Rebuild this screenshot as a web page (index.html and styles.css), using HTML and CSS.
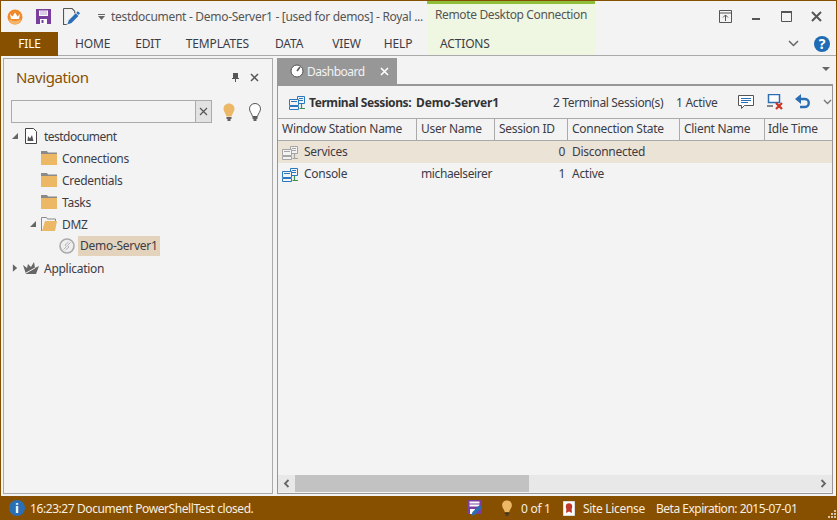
FILE: index.html
```html
<!DOCTYPE html>
<html lang="en">
<head>
<meta charset="utf-8">
<title>Royal TS</title>
<link rel="stylesheet" href="styles.css">
</head>
<body>
<svg class="defs" width="0" height="0" aria-hidden="true">
  <defs>
    <symbol id="folder" viewBox="0 0 16 16">
      <path d="M0 1h6l1 1.500h9V4H0z" fill="#8a8a8a"/>
      <path d="M0 4h16v11H0z" fill="#ecb866"/>
    </symbol>
    <symbol id="net" viewBox="0 0 16 16">
      <path d="M8.500 2.500h7v7h-7z" fill="#f3f3f3" stroke="currentColor"/>
      <path d="M10 4.500h4M10 6.500h4" stroke="currentColor"/>
      <path d="M.5 5.500h9v6h-9z" fill="#f3f3f3" stroke="currentColor"/>
      <path d="M2 7.500h6" stroke="currentColor"/>
      <path d="M.5 12.500h9v3h-9z" fill="#f3f3f3" stroke="currentColor"/>
      <path d="M12.500 10v4M10.500 14.500h5.500" stroke="var(--net2)" stroke-width="1.200"/>
    </symbol>
  </defs>
</svg>
<div class="app">
  <header class="head">
    <div class="head-main">
      <div class="titlebar">
        <svg class="ic-logo" viewBox="0 0 16 16"><circle cx="8" cy="8" r="7.500" fill="#ee8a2a"/><path d="M3 5l2.500 2.500L8 3.500l2.500 4L13 5l-1 5H4z" fill="#fff"/><path d="M1.500 10q6.500 4 13 0-1.500 5-6.500 5.500-5-.5-6.500-5.500z" fill="#f7b468"/></svg>
        <svg class="ic-save" viewBox="0 0 15 15"><path d="M0 0h15v15H0z" fill="#7a3f9d"/><path d="M3 1.500h9v5.500H3z" fill="#fff"/><path d="M4 3h7M4 5h7" stroke="#b79ccb"/><path d="M4 10h7v5H4z" fill="#fff"/><path d="M5.500 11h2v3h-2z" fill="#7a3f9d"/></svg>
        <svg class="ic-edit" viewBox="0 0 16 16"><path d="M.5.500h8l2.500 2.500v2M.5.500v15h3" fill="none" stroke="#555"/><path d="M4 15.500l1.500-4 6.500-6.500 2.500 2.500L8 14z" fill="#2a6fb5"/><path d="M12.500 4.500l1.500-1.500 2 2-1.500 1.500z" fill="#2a6fb5"/></svg>
        <svg class="ic-qat" viewBox="0 0 7 6"><path d="M0 0h7v1H0zM0 2h7L3.500 6z" fill="#666"/></svg>
        <span class="doc-title">testdocument - Demo-Server1 - [used for demos] - Royal ...</span>
      </div>
      <nav class="tabs">
        <span class="file-tab">FILE</span>
        <span class="tab tab-home">HOME</span>
        <span class="tab tab-edit">EDIT</span>
        <span class="tab tab-tpl">TEMPLATES</span>
        <span class="tab tab-data">DATA</span>
        <span class="tab tab-view">VIEW</span>
        <span class="tab">HELP</span>
      </nav>
    </div>
    <div class="context">
      <div class="context-title">Remote Desktop Connection</div>
      <div class="context-tab">ACTIONS</div>
    </div>
    <div class="head-right">
      <div class="win-btns">
        <svg class="win win-pin" viewBox="0 0 13 13"><path d="M.5.500h12v12H.5zM.5 3h12" fill="none" stroke="#555"/><path d="M6.500 11V5M4 7.500l2.500-2.500L9 7.500" fill="none" stroke="#555"/></svg>
        <svg class="win win-min" viewBox="0 0 13 13"><path d="M2 8h8v2H2z" fill="#555"/></svg>
        <svg class="win win-max" viewBox="0 0 13 13"><path d="M1.500 1.500h10v10h-10z" fill="none" stroke="#555"/><path d="M1 1h11v2H1z" fill="#555"/></svg>
        <svg class="win win-close" viewBox="0 0 13 13"><path d="M2 2l9 9M11 2l-9 9" stroke="#555" stroke-width="2"/></svg>
      </div>
      <div class="head-tools">
        <svg class="chev" viewBox="0 0 11 7"><path d="M1 1l4.500 4.500L10 1" fill="none" stroke="#666" stroke-width="1.500"/></svg>
        <span class="help">?</span>
      </div>
    </div>
  </header>

  <main class="work">
    <section class="nav">
      <div class="nav-head">
        <span class="nav-title">Navigation</span>
        <svg class="pin" viewBox="0 0 9 9"><path d="M2 0h5v5h1v1H5v3H4V6H1V5h1z" fill="#555"/></svg>
        <svg class="x" viewBox="0 0 9 9"><path d="M1 1l7 7M8 1L1 8" stroke="#555" stroke-width="1.500"/></svg>
      </div>
      <div class="search">
        <div class="search-box"><span class="search-input"></span><span class="search-clear"><svg viewBox="0 0 9 9"><path d="M1 1l7 7M8 1L1 8" stroke="#555" stroke-width="1.200"/></svg></span></div>
        <svg class="bulb bulb-on" viewBox="0 0 12 18"><path d="M6 .5C2.800.5.500 2.800.5 5.800c0 3 2.200 4.200 3 7.700h5c.8-3.500 3-4.700 3-7.700C11.500 2.800 9.200.5 6 .5z" fill="#ecb866"/><path d="M3.500 15h5M4.500 17h3" stroke="#333" stroke-width="1.300"/></svg>
        <svg class="bulb bulb-off" viewBox="0 0 12 18"><path d="M6 .5C2.800.5.500 2.800.5 5.800c0 3 2.200 4.200 3 7.700h5c.8-3.500 3-4.700 3-7.700C11.500 2.800 9.200.5 6 .5z" fill="#fff" stroke="#555"/><path d="M3.500 15h5M4.500 17h3" stroke="#333" stroke-width="1.300"/></svg>
      </div>
      <ul class="tree">
        <li class="node l0"><svg class="arrow" viewBox="0 0 7 7"><path d="M7 0v7H0z" fill="#666"/></svg>
          <svg class="ic16 doc" viewBox="0 0 16 16"><path d="M1.500 .5h8l3 3v12h-11z" fill="#fff" stroke="#444"/><path d="M3.500 13l.5-5 2 2.500L8 7l1.500 6z" fill="#555"/></svg>
          <span class="root-label">testdocument</span></li>
        <li class="node l1"><svg class="ic16"><use href="#folder"/></svg><span>Connections</span></li>
        <li class="node l1"><svg class="ic16"><use href="#folder"/></svg><span>Credentials</span></li>
        <li class="node l1"><svg class="ic16"><use href="#folder"/></svg><span>Tasks</span></li>
        <li class="node l1b"><svg class="arrow" viewBox="0 0 7 7"><path d="M7 0v7H0z" fill="#666"/></svg>
          <svg class="ic16" viewBox="0 0 16 16"><path d="M.5 15V1.500h5l1 1.500h8v2" fill="none" stroke="#8a8a8a"/><path d="M4 5h12l-2 10H1z" fill="#ecb866"/></svg>
          <span>DMZ</span></li>
        <li class="node l2"><svg class="ic16 srv" viewBox="0 0 16 16"><circle cx="8" cy="8" r="7" fill="#eee" stroke="#aaa" stroke-width="1.600"/><path d="M4.500 11.500l3-3-1.500-1.500 3.500-3M11.500 4.500l-3 3 1.500 1.500-3.500 3" fill="none" stroke="#b5b5b5"/></svg><span class="sel">Demo-Server1</span></li>
        <li class="node l0"><svg class="arrow arrow-r" viewBox="0 0 7 9"><path d="M1 0l5 4.500L1 9z" fill="#666"/></svg>
          <svg class="ic16 crown" viewBox="0 0 16 12"><path d="M0 3l4 3 1-4 3 3 3-5 1 6 4-2-3 8H3z" fill="#666"/><path d="M3 11l9-5" stroke="#f3f3f3"/></svg>
          <span>Application</span></li>
      </ul>
    </section>

    <section class="doc-area">
      <div class="doc-tabs">
        <div class="doc-tab">
          <svg class="gauge" viewBox="0 0 14 14"><circle cx="7" cy="7" r="6" fill="#fff" stroke="#555"/><path d="M7 7l3-4" stroke="#555" stroke-width="1.500"/></svg>
          <span class="doc-tab-label">Dashboard</span>
          <svg class="doc-tab-x" viewBox="0 0 9 9"><path d="M1 1l7 7M8 1L1 8" stroke="#fff" stroke-width="1.600"/></svg>
        </div>
        <svg class="doc-menu" viewBox="0 0 8 4"><path d="M0 0h8L4 4z" fill="#666"/></svg>
      </div>
      <div class="panel">
        <div class="panel-head">
          <svg class="ic16 net net-blue"><use href="#net"/></svg>
          <span class="panel-title">Terminal Sessions:</span>
          <span class="panel-title panel-server">Demo-Server1</span>
          <span class="count">2 Terminal Session(s)</span>
          <span class="active">1 Active</span>
          <svg class="tool tool-msg" viewBox="0 0 16 16"><path d="M.5 1.500h15v10h-9l-3 3v-3h-3z" fill="#fff" stroke="#555"/><path d="M3 4.500h10M3 6.500h10M3 8.500h7" stroke="#2a6fb5"/></svg>
          <svg class="tool tool-off" viewBox="0 0 16 16"><path d="M1.500 .5h11v8h-11z" fill="#fff" stroke="#2a6fb5" stroke-width="1.500"/><path d="M0 12h6" stroke="#888" stroke-width="2"/><path d="M9 9l6 6M15 9l-6 6" stroke="#cc3322" stroke-width="2.200"/></svg>
          <svg class="tool tool-undo" viewBox="0 0 16 16"><path d="M4 5h6c5 0 5 8 0 8H5" fill="none" stroke="#2a6fb5" stroke-width="2.400"/><path d="M6 0v10L0 5z" fill="#2a6fb5"/></svg>
          <svg class="panel-chev" viewBox="0 0 9 6"><path d="M1 1l3.500 3.500L8 1" fill="none" stroke="#777" stroke-width="1.400"/></svg>
        </div>
        <div class="grid">
          <div class="row row-head">
            <span class="c c1">Window Station Name</span>
            <span class="c c2">User Name</span>
            <span class="c c3">Session ID</span>
            <span class="c c4">Connection State</span>
            <span class="c c5">Client Name</span>
            <span class="c c6">Idle Time</span>
          </div>
          <div class="row row-sel">
            <span class="c c1"><svg class="ic16 net net-grey"><use href="#net"/></svg>Services</span>
            <span class="c c2"></span>
            <span class="c c3 num">0</span>
            <span class="c c4">Disconnected</span>
          </div>
          <div class="row">
            <span class="c c1"><svg class="ic16 net net-blue"><use href="#net"/></svg>Console</span>
            <span class="c c2">michaelseirer</span>
            <span class="c c3 num">1</span>
            <span class="c c4">Active</span>
          </div>
        </div>
        <div class="hscroll">
          <span class="sb-btn"><svg viewBox="0 0 7 9"><path d="M5.500 1L2 4.500 5.500 8" fill="none" stroke="#666" stroke-width="1.800"/></svg></span>
          <span class="sb-thumb"></span>
          <span class="sb-track"></span>
          <span class="sb-btn"><svg viewBox="0 0 7 9"><path d="M1.500 1L5 4.500 1.500 8" fill="none" stroke="#666" stroke-width="1.800"/></svg></span>
        </div>
      </div>
    </section>
  </main>

  <footer class="status">
    <span class="info">i</span>
    <span class="status-msg">16:23:27 Document PowerShellTest closed.</span>
    <svg class="st-save" viewBox="0 0 16 16"><path d="M0 0h15v14H0z" fill="#7a3f9d"/><path d="M2.500 1.500h10v2h-10zM2.500 4.500h10v2h-10z" fill="#fff"/><path d="M3 9h5v5H3z" fill="#fff"/><path d="M4 16l1.500-4 7-7 2.500 2.500-7 7z" fill="#2a6fb5"/></svg>
    <svg class="st-bulb" viewBox="0 0 12 18"><path d="M6 .5C2.800.5.500 2.800.5 5.800c0 3 2.200 4.200 3 7.700h5c.8-3.500 3-4.700 3-7.700C11.500 2.800 9.200.5 6 .5z" fill="#ecb866"/><path d="M3.500 15h5M4.500 17h3" stroke="#333" stroke-width="1.300"/></svg>
    <span class="st-count">0 of 1</span>
    <svg class="st-lic" viewBox="0 0 12 15"><path d="M.5.500h11v14H.5z" fill="#fff" stroke="#ddd"/><circle cx="6" cy="5.500" r="3.200" fill="#c0392b"/><path d="M3.500 7l-.5 5 3-1.500L9 12l-.5-5z" fill="#c0392b"/></svg>
    <span class="st-site">Site License</span>
    <span class="st-beta">Beta Expiration: 2015-07-01</span>
    <svg class="grip" viewBox="0 0 9 9"><path d="M7 0h2v2H7zM4 3h2v2H4zM7 3h2v2H7zM1 6h2v2H1zM4 6h2v2H4zM7 6h2v2H7z" fill="#d8c4a6"/></svg>
  </footer>
</div>
</body>
</html>
```

FILE: styles.css
```css
* { box-sizing: border-box; }
html, body { margin: 0; padding: 0; }
body { width: 837px; height: 520px; overflow: hidden; background: #f3f3f3; }
.defs { position: absolute; }
svg { display: block; flex: none; }

.app {
  width: 837px;
  height: 520px;
  display: flex;
  flex-direction: column;
  background: #f3f3f3;
  border: 1px solid #875000;
  border-bottom: 0;
  font-family: "Noto Sans", sans-serif;
  font-size: 12px;
  letter-spacing: -0.28px;
  color: #3c3c46;
}

/* header */
.head { display: flex; height: 55px; flex: none; }
.head-main { width: 426px; display: flex; flex-direction: column; }
.titlebar { height: 31px; display: flex; align-items: center; }
.ic-logo { width: 16px; height: 16px; margin-left: 6px; }
.ic-save { width: 15px; height: 15px; margin-left: 13px; }
.ic-edit { width: 17px; height: 17px; margin-left: 12px; }
.ic-qat { width: 7px; height: 6px; margin-left: 18px; }
.doc-title { margin-left: 6px; margin-top: -1px; color: #555; white-space: nowrap; letter-spacing: -0.3px; }
.tabs { height: 24px; display: flex; align-items: center; border-bottom: 1px solid #aaa; letter-spacing: -0.15px; }
.file-tab {
  width: 57px; height: 24px; margin-bottom: -1px;
  background: #875000; color: #fff; text-align: center; line-height: 23px;
}
.tab { color: #3c3c46; line-height: 26px; }
.tab-home { margin-left: 17px; margin-right: 25px; }
.tab-edit { margin-right: 25px; }
.tab-tpl { margin-right: 26px; }
.tab-data { margin-right: 29px; }
.tab-view { margin-right: 23px; }

.context { width: 168px; height: 55px; display: flex; flex-direction: column; background: #eff7e2; border-top: 3px solid #8fbf3a; border-bottom: 1px solid #aaa; }
.context-title { height: 25px; line-height: 21px; padding-left: 8px; color: #555; letter-spacing: -0.36px; }
.context-tab { height: 26px; padding-left: 13px; line-height: 30px; letter-spacing: -0.15px; }

.head-right { flex: 1; display: flex; flex-direction: column; }
.win-btns { height: 31px; display: flex; align-items: center; }
.win { width: 13px; height: 13px; }
.win-pin { margin-left: 124px; }
.win-min { margin-left: 18px; }
.win-max { margin-left: 17px; }
.win-close { margin-left: 17px; }
.head-tools { height: 24px; display: flex; align-items: center; border-bottom: 1px solid #aaa; }
.chev { width: 11px; height: 7px; margin-left: 193px; }
.help {
  width: 16px; height: 16px; margin-left: 15px; border-radius: 50%;
  background: #1f6cb4; color: #fff; text-align: center;
  font-weight: 700; font-size: 14px; line-height: 16px; letter-spacing: 0;
}

/* work */
.work { flex: 1; min-height: 0; display: flex; padding: 2px 3px 2px 2px; gap: 4px; }

.nav { width: 270px; border: 1px solid #aaa; background: #f3f3f3; display: flex; flex-direction: column; }
.nav-head { height: 41px; display: flex; align-items: center; padding-left: 12px; flex: none; }
.nav-title { font-size: 15px; color: #875000; flex: 1; letter-spacing: -0.4px; margin-top: -6px; }
.pin { width: 9px; height: 9px; margin-right: 10px; margin-top: -4px; }
.x { width: 9px; height: 9px; margin-right: 13px; margin-top: -4px; }
.search { display: flex; align-items: center; padding-left: 7px; height: 23px; flex: none; }
.search-box { width: 201px; height: 23px; display: flex; border: 1px solid #aaa; background: #f3f3f3; }
.search-input { flex: 1; }
.search-clear { width: 16px; background: #e2e2e2; border-left: 1px solid #aaa; display: flex; align-items: center; justify-content: center; }
.search-clear svg { width: 9px; height: 9px; }
.bulb { width: 12px; height: 18px; }
.bulb-on { margin-left: 11px; }
.bulb-off { margin-left: 14px; }

.tree { list-style: none; margin: 2px 0 0; padding: 0; }
.node { height: 22px; display: flex; align-items: center; }
.l0 { padding-left: 8px; }
.l1 { padding-left: 37px; }
.l1b { padding-left: 26px; }
.l2 { padding-left: 55px; }
.arrow { width: 6px; height: 6px; margin-right: 5px; }
.arrow-r { width: 6px; height: 8px; margin-right: 5px; }
.ic16 { width: 16px; height: 16px; }
.node .ic16 { margin-right: 5px; }
.l0 .doc { margin-left: 1px; margin-right: 4px; }
.root-label { letter-spacing: -0.52px; }
.crown { height: 12px; }
.l2 .srv { margin-right: 3px; }
.node .sel { background: #e3d3bd; line-height: 20px; height: 20px; padding: 0 2px; }

.doc-area { flex: 1; min-width: 0; display: flex; flex-direction: column; }
.doc-tabs { height: 26px; display: flex; flex: none; justify-content: space-between; align-items: center; }
.doc-tab { width: 120px; height: 26px; background: #979797; color: #f3f3f3; display: flex; align-items: center; padding-left: 13px; }
.gauge { width: 14px; height: 14px; }
.doc-tab-label { margin-left: 3px; letter-spacing: -0.5px; }
.doc-tab-x { width: 9px; height: 9px; margin-left: 15px; }
.doc-menu { width: 8px; height: 4px; margin-right: 3px; margin-top: -4px; }

.panel { flex: 1; min-height: 0; border: 1px solid #979797; border-top-width: 2px; display: flex; flex-direction: column; background: #f3f3f3; }
.panel-head { height: 32px; flex: none; display: flex; align-items: center; padding-left: 11px; white-space: nowrap; }
.panel-head .ic16 { margin-right: 4px; }
.panel-title { font-weight: 700; color: #333; letter-spacing: -0.42px; width: 107px; flex: none; }
.panel-server { width: 137px; letter-spacing: -0.12px; }
.count { width: 123px; flex: none; letter-spacing: -0.36px; }
.active { width: 62px; flex: none; }
.tool { width: 16px; height: 16px; }
.tool-off { margin-left: 13px; }
.tool-undo { margin-left: 12px; }
.panel-chev { width: 9px; height: 6px; margin-left: 12px; }

.net { color: #2a78c0; --net2: #3f8f4f; }
.net-grey { color: #a5a5a5; --net2: #a5a5a5; }

.grid { flex: 1; min-height: 0; }
.row { display: flex; height: 22px; align-items: center; }
.row-head { height: 23px; border-top: 1px solid #aaa; border-bottom: 1px solid #aaa; }
.row-head .c { padding-bottom: 2px; }
.row-sel { background: #ece3d7; }
.c { padding-left: 4px; padding-bottom: 1px; white-space: nowrap; display: flex; align-items: center; height: 100%; }
.c .ic16 { margin-right: 6px; margin-top: 1px; }
.row-head .c { border-right: 1px solid #aaa; }
.row-head .c6 { border-right: 0; padding-left: 3px; }
.c1 { width: 139px; }
.c2 { width: 78px; letter-spacing: -0.4px; }
.row-head .c2 { letter-spacing: -0.28px; }
.c3 { width: 73px; }
.c4 { width: 112px; }
.c5 { width: 85px; }
.c6 { width: 66px; }
.num { justify-content: flex-end; padding-right: 3px; }

.hscroll { height: 17px; margin-bottom: 1px; display: flex; background: #e8e8e8; flex: none; }
.sb-btn { width: 17px; display: flex; align-items: center; justify-content: center; }
.sb-btn svg { width: 7px; height: 9px; }
.sb-thumb { width: 234px; background: #c2c2c2; }
.sb-track { flex: 1; }

/* status */
.status { height: 24px; flex: none; margin: 0 -1px; background: #875000; color: #f7efe2; display: flex; align-items: center; }
.info { width: 16px; height: 16px; margin-left: 9px; border-radius: 50%; background: #2a6fb5; color: #fff; text-align: center; font-weight: 700; font-size: 13px; line-height: 16px; letter-spacing: 0; }
.status-msg { margin-left: 5px; width: 437px; letter-spacing: -0.42px; }
.st-save { width: 16px; height: 16px; }
.st-bulb { width: 12px; height: 16px; margin-left: 18px; }
.st-count { margin-left: 8px; width: 42px; }
.st-lic { width: 12px; height: 15px; }
.st-site { margin-left: 8px; width: 73px; letter-spacing: -0.32px; }
.st-beta { white-space: nowrap; flex: 1; letter-spacing: -0.5px; }
.grip { width: 9px; height: 9px; margin-right: 1px; margin-top: 12px; }
```
